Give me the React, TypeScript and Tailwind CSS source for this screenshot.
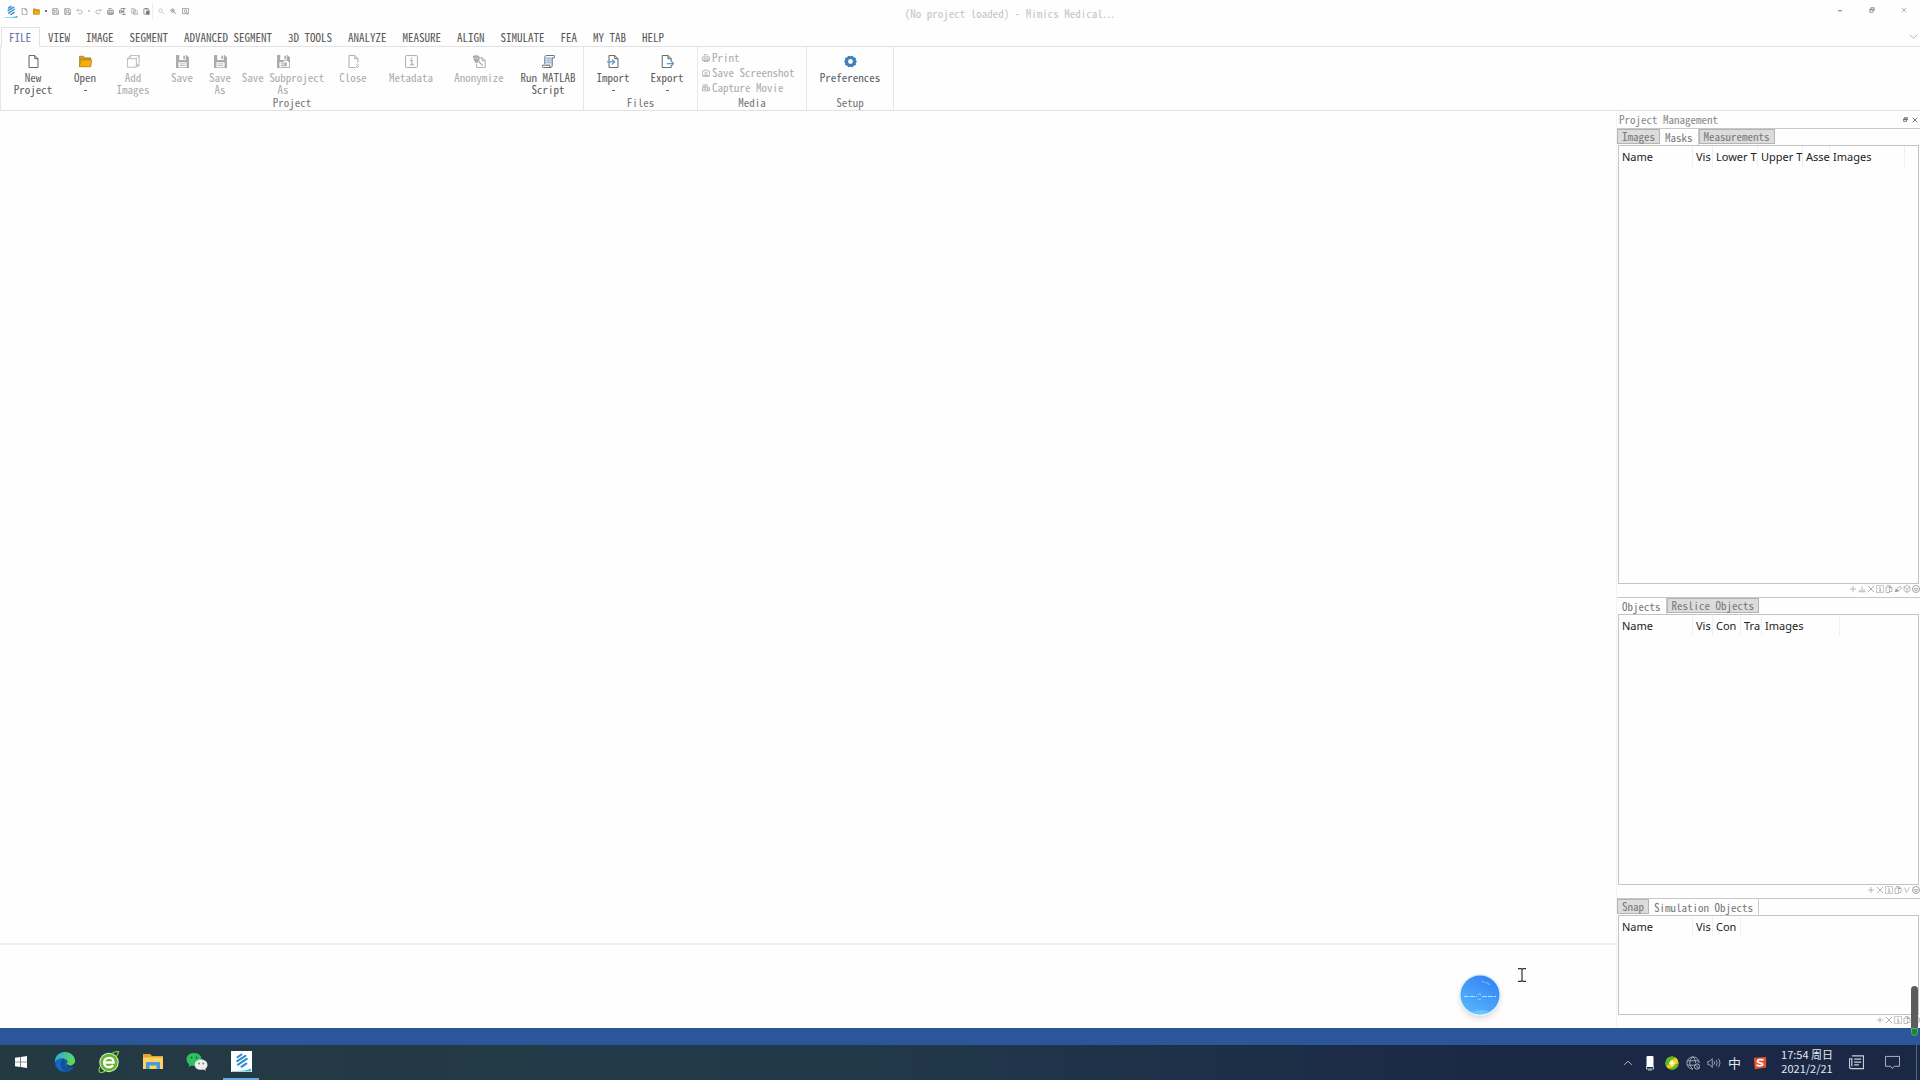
import type { ReactNode } from 'react'
import clsx from 'clsx'

type IconName =
  | 'page'
  | 'folder'
  | 'save'
  | 'saveAll'
  | 'undo'
  | 'redo'
  | 'print'
  | 'cut'
  | 'copy'
  | 'paste'
  | 'search'
  | 'searchPlus'
  | 'searchBox'
  | 'addImages'
  | 'saveSub'
  | 'close'
  | 'info'
  | 'anonymize'
  | 'script'
  | 'import'
  | 'export'
  | 'camera'
  | 'movie'
  | 'gear'
  | 'plus'
  | 'cross'
  | 'threshold'
  | 'duplicate'
  | 'edit'
  | 'cube'
  | 'vee'
  | 'more'
  | 'restore'
  | 'minimize'
  | 'chevronUp'
  | 'chevronDown'

const floppy = (
  <path d="M1.5 1.5h11l2 2v11h-13z M4 1.5v5h7v-5 M4 14.5v-5h8v5" fill="none" stroke="currentColor" strokeWidth="1.6" />
)

const floppySolid = (
  <path
    fillRule="evenodd"
    fill="currentColor"
    d="M0 0h13l3 3v13H0z M4 0v6h8V0z M3 9v6h10V9z M9 1h2v4H9z M4.5 10.5h7v1h-7z M4.5 12.5h7v1h-7z"
  />
)

const page = <path d="M2.5.5h7l4 4v11h-11z M9.5.5v4h4" fill="none" stroke="currentColor" strokeWidth="1.2" />

const shapes: Record<IconName, ReactNode> = {
  page,
  folder: (
    <>
      <path d="M.5 14V1.5h5L7 3.5h7.5V14z" fill="#d99a1c" stroke="#8a6a24" strokeWidth=".7" />
      <path d="M.5 14.5 2.5 6H16l-2 8.5z" fill="#f8ae08" stroke="#a87a1c" strokeWidth=".7" />
    </>
  ),
  save: floppySolid,
  saveAll: floppy,
  undo: <path d="M5 2 2 5l3 3M2 5h8a4 4 0 0 1 0 8H5" fill="none" stroke="currentColor" strokeWidth="1.5" />,
  redo: <path d="M11 2l3 3-3 3M14 5H6a4 4 0 0 0 0 8h6" fill="none" stroke="currentColor" strokeWidth="1.5" />,
  print: (
    <path d="M4.5 6V1h5l2 2v3M1 6h14v7H1zM4 9.5h8V15H4z" fill="none" stroke="currentColor" strokeWidth="1.6" />
  ),
  cut: <path d="M4 1h11M11 1v14M7 15h8M1 5h6v6H1zM4 8h6" fill="none" stroke="currentColor" strokeWidth="1.8" />,
  copy: <path d="M1.5 1.5h6l2 2v8h-8zM6 5h6l2.5 2.5v7H6z" fill="#fff" stroke="currentColor" strokeWidth="1.4" />,
  paste: (
    <>
      <path d="M2 2h11v12H2z" fill="none" stroke="currentColor" strokeWidth="1.6" />
      <path d="M5 0h5v3H5zM7 6h8v9H7z" fill="currentColor" />
    </>
  ),
  search: <path d="M6 2a4 4 0 1 1 0 8 4 4 0 0 1 0-8M9 9l5 5" fill="none" stroke="currentColor" strokeWidth="1.3" />,
  searchPlus: (
    <path d="M6 2a4 4 0 1 1 0 8 4 4 0 0 1 0-8M9 9l5 5M4 6h4M6 4v4" fill="none" stroke="currentColor" strokeWidth="1.5" />
  ),
  searchBox: (
    <path d="M1 13V1h14v12zM8 4a3 3 0 1 1 0 6 3 3 0 0 1 0-6M10 10l4 5" fill="none" stroke="currentColor" strokeWidth="1.4" />
  ),
  addImages: (
    <path
      d="M4 3.5V.5h11v10M.5 4.5 4 1M11.5 4.5 15 1M.5 4.5h11V15H.5zM11.5 12.5h4.5M13.7 10.5V15"
      fill="none"
      stroke="currentColor"
    />
  ),
  saveSub: (
    <>
      {floppySolid}
      <path d="M7.5 6.5h5l3 3v6h-8z" fill="#fff" stroke="currentColor" />
      <path d="M9 9h3v5H9z" fill="currentColor" />
    </>
  ),
  close: (
    <>
      {page}
      <path d="m10 10 5 5m0-5-5 5" stroke="#fff" strokeWidth="3" />
      <path d="m11 11 4 4m0-4-4 4" stroke="currentColor" />
    </>
  ),
  info: (
    <>
      <rect x=".7" y=".7" width="14.6" height="14.6" rx="1" fill="none" stroke="currentColor" strokeWidth="1.2" />
      <path d="M6 6.5h2.5V12M6 12h5M8 3v2" fill="none" stroke="currentColor" strokeWidth="1.5" />
    </>
  ),
  anonymize: (
    <>
      <path d="M5.5 3.5h6l3.5 3v9H4.5V11M11 3.5v3.5h4" fill="none" stroke="currentColor" strokeWidth="1.2" />
      <path d="M0 1c3-1 6-1 8 1v4c-1 2-3 4-4 4S0 6 0 1" fill="currentColor" />
      <path d="M2 4h1.5M5 4h1.5" stroke="#fff" />
      <path d="M7 8l5 5" stroke="currentColor" strokeWidth="1.5" />
    </>
  ),
  script: (
    <>
      <path d="M5 2.5h7v9H5z" fill="#cfe3f5" />
      <path
        d="M3.5 11V3c0-1.5 1-2.5 2-2.5h9c1.5 0 1.5 3 0 3h-2V13c0 1.5-1 2.5-2 2.5H2c-2 0-2-3-1-3h8.5c0 2 .5 3 1.5 3"
        fill="none"
        stroke="currentColor"
        strokeWidth="1.2"
      />
      <path d="M5.5 4h5M5.5 6.5h5M5.5 9h5" stroke="#6fa5d8" />
    </>
  ),
  import: (
    <>
      {page}
      <path d="M0 8.5h9M6 5.500l3.5 3-3.5 3" fill="none" stroke="#5a9bd5" strokeWidth="1.5" />
    </>
  ),
  export: (
    <>
      <path d="M12.5 8V4.500l-4-4h-7v15h11V13M8.5.5v4h4" fill="none" stroke="currentColor" strokeWidth="1.2" />
      <path d="M7 10.5h8M12.5 7.500l3 3-3 3" fill="none" stroke="#5a9bd5" strokeWidth="1.5" />
    </>
  ),
  camera: (
    <path
      d="M1 4h3l1-2h6l1 2h3v9H1zM8 6a2.5 2.5 0 1 1 0 5 2.5 2.5 0 0 1 0-5M1 15h14"
      fill="none"
      stroke="currentColor"
      strokeWidth="1.5"
    />
  ),
  movie: (
    <path
      d="M4 1a2 2 0 1 1 0 4 2 2 0 0 1 0-4M9 1a2 2 0 1 1 0 4 2 2 0 0 1 0-4M1 6h10v8H1zM11 9l4-2v7l-4-2M3 8h6M3 11h6"
      fill="none"
      stroke="currentColor"
      strokeWidth="1.6"
    />
  ),
  gear: (
    <path
      fillRule="evenodd"
      fill="#3d7fbd"
      d="M5.500.8 8 1.600l2.500-.8 1.600 2.100 2.500.9v2.700L16 8l-1.400 1.500v2.700l-2.500.9-1.600 2.100L8 14.400l-2.500.8-1.600-2.100-2.500-.9V9.500L0 8l1.400-1.500V3.800l2.500-.9zM8 5a3 3 0 1 0 0 6 3 3 0 0 0 0-6z"
    />
  ),
  plus: <path d="M8 2v12M2 8h12" stroke="currentColor" strokeWidth="1.3" />,
  cross: <path d="m2 2 12 12M14 2 2 14" stroke="currentColor" strokeWidth="1.5" />,
  threshold: <path d="M1 13.5h14M4 13V9M8 13V3M12 13V8" stroke="currentColor" strokeWidth="1.3" />,
  duplicate: (
    <>
      <path d="M2 4h7v11H2zM4 1h6l4 4v8H9" fill="none" stroke="currentColor" strokeWidth="1.3" />
      <path d="M9 1v5h5z" fill="currentColor" />
    </>
  ),
  edit: (
    <>
      <path d="m5 8 7-6 3 4-6 6z" fill="none" stroke="currentColor" strokeWidth="1.4" />
      <path d="M1 14 4 7l6 6z" fill="currentColor" />
    </>
  ),
  cube: (
    <path d="m8 1 6 3v7l-6 4-6-4V4zM2 4l6 4 6-4M8 8v7" fill="none" stroke="currentColor" strokeWidth="1.3" />
  ),
  vee: <path d="m3 3 4 10 6-10" fill="none" stroke="currentColor" strokeWidth="1.3" />,
  more: (
    <path
      d="M8 1a7 7 0 1 1 0 14A7 7 0 0 1 8 1M3.5 7.500h9M5 9.500l3 2.500 3-2.500"
      fill="none"
      stroke="currentColor"
      strokeWidth="1.8"
    />
  ),
  restore: <path d="M5 5V2h9v7h-3M2 6h9v8H2zM2 7.500h9" fill="none" stroke="currentColor" strokeWidth="2" />,
  minimize: <path d="M3 10h10" stroke="currentColor" strokeWidth="3" />,
  chevronUp: <path d="m2 11 6-6 6 6" fill="none" stroke="currentColor" strokeWidth="1.5" />,
  chevronDown: <path d="m1 5 7 6 7-6" fill="none" stroke="currentColor" strokeWidth="1.5" />,
}

function Icon({ name, className = 'size-2' }: { name: IconName; className?: string }) {
  return (
    <svg viewBox="0 0 16 16" aria-hidden="true" className={clsx('shrink-0', className)}>
      {shapes[name]}
    </svg>
  )
}

function MimicsLogo({ className }: { className: string }) {
  return (
    <svg viewBox="0 0 24 24" aria-hidden="true" className={clsx('shrink-0', className)}>
      <path
        d="m7.500 7 4.500-3M7 11.500 16.500 5.500M8 15.500l10-6.500M12 18l5.500-3.500"
        stroke="#2f8fce"
        strokeWidth="2.4"
        strokeLinecap="round"
      />
      <path d="M1 22.500c7 .5 15 .5 22-2.500v3.500H1z" fill="#37b3e0" />
    </svg>
  )
}

const quickActions: { icon: IconName; label: string; tone: string }[][] = [
  [
    { icon: 'page', label: 'New', tone: 'text-[#666]' },
    { icon: 'folder', label: 'Open', tone: 'text-[#666]' },
  ],
  [
    { icon: 'saveAll', label: 'Save', tone: 'text-[#888]' },
    { icon: 'saveAll', label: 'Save as', tone: 'text-[#888]' },
    { icon: 'undo', label: 'Undo', tone: 'text-[#999]' },
  ],
  [
    { icon: 'redo', label: 'Redo', tone: 'text-[#999]' },
    { icon: 'print', label: 'Print', tone: 'text-[#777]' },
    { icon: 'cut', label: 'Cut', tone: 'text-[#777]' },
    { icon: 'copy', label: 'Copy', tone: 'text-[#888]' },
    { icon: 'paste', label: 'Paste', tone: 'text-[#777]' },
  ],
]

const zoomActions: { icon: IconName; label: string; tone: string }[] = [
  { icon: 'search', label: 'Zoom', tone: 'text-[#aaa]' },
  { icon: 'searchPlus', label: 'Zoom in', tone: 'text-[#777]' },
  { icon: 'searchBox', label: 'Zoom to fit', tone: 'text-[#777]' },
]

function QuickButton({ icon, label, tone }: { icon: IconName; label: string; tone: string }) {
  return (
    <button aria-label={label} className={clsx('flex w-3 justify-center', tone)}>
      <Icon name={icon} className="size-[7px]" />
    </button>
  )
}

function TitleBar() {
  return (
    <header className="flex h-[27px] shrink-0">
      <div className="flex h-[22px] items-center pl-1">
        <MimicsLogo className="size-[14px]" />
        {quickActions.map((group, i) => (
          <div key={i} className="flex items-center">
            {i > 0 && (
              <span className="flex w-[7px] justify-center">
                <span className={clsx('size-[2px]', i === 1 ? 'bg-[#777]' : 'bg-[#ccc]')} />
              </span>
            )}
            {group.map((a) => (
              <QuickButton key={a.label} {...a} />
            ))}
          </div>
        ))}
        <span className="mr-[2px] h-4 w-px bg-[#eee]" />
        {zoomActions.map((a) => (
          <QuickButton key={a.label} {...a} />
        ))}
      </div>
      <h1 className="flex-1 pl-1 text-center leading-[27px] text-[#c4c4c4]">(No project loaded) - Mimics Medical…</h1>
      <div className="flex h-5 text-[#777]">
        <button aria-label="Minimize" className="flex w-8 items-center justify-center">
          <Icon name="minimize" className="size-[6px]" />
        </button>
        <button aria-label="Restore" className="flex w-8 items-center justify-center">
          <Icon name="restore" className="size-[6px]" />
        </button>
        <button aria-label="Close" className="flex w-8 items-center justify-center">
          <Icon name="cross" className="size-[6px]" />
        </button>
      </div>
    </header>
  )
}

const menuTabs = [
  'VIEW',
  'IMAGE',
  'SEGMENT',
  'ADVANCED SEGMENT',
  '3D TOOLS',
  'ANALYZE',
  'MEASURE',
  'ALIGN',
  'SIMULATE',
  'FEA',
  'MY TAB',
  'HELP',
]

function MenuTabs() {
  return (
    <nav className="flex h-5 shrink-0 items-stretch border-b border-[#e2e2e2] text-[#555]">
      <button className="-mb-px ml-px border-x border-t border-[#e2e2e2] bg-[#fefefe] pr-2 pl-[7px] text-[#6474a8]">
        FILE
      </button>
      {menuTabs.map((tab) => (
        <button key={tab} className="px-2 pt-[2px]">
          {tab}
        </button>
      ))}
      <button aria-label="Collapse ribbon" className="mr-[2px] ml-auto text-[#aaa]">
        <Icon name="chevronDown" className="size-[9px]" />
      </button>
    </nav>
  )
}

type Tool = { icon: IconName; lines: string[]; width: string; enabled?: boolean; menu?: boolean }

const projectTools: Tool[] = [
  { icon: 'page', lines: ['New', 'Project'], width: 'w-16', enabled: true },
  { icon: 'folder', lines: ['Open'], width: 'w-10', enabled: true, menu: true },
  { icon: 'addImages', lines: ['Add', 'Images'], width: 'w-14' },
  { icon: 'save', lines: ['Save'], width: 'w-[42px]' },
  { icon: 'save', lines: ['Save', 'As'], width: 'w-[34px]' },
  { icon: 'saveSub', lines: ['Save Subproject', 'As'], width: 'w-[92px]' },
  { icon: 'close', lines: ['Close'], width: 'w-12' },
  { icon: 'info', lines: ['Metadata'], width: 'w-[68px]' },
  { icon: 'anonymize', lines: ['Anonymize'], width: 'w-[68px]' },
  { icon: 'script', lines: ['Run MATLAB', 'Script'], width: 'w-[70px]', enabled: true },
]

const fileTools: Tool[] = [
  { icon: 'import', lines: ['Import'], width: 'w-[58px]', enabled: true, menu: true },
  { icon: 'export', lines: ['Export'], width: 'w-[50px]', enabled: true, menu: true },
]

const setupTools: Tool[] = [{ icon: 'gear', lines: ['Preferences'], width: 'w-[86px]', enabled: true }]

const mediaTools: { icon: IconName; label: string }[] = [
  { icon: 'print', label: 'Print' },
  { icon: 'camera', label: 'Save Screenshot' },
  { icon: 'movie', label: 'Capture Movie' },
]

function ToolButton({ icon, lines, width, enabled, menu }: Tool) {
  return (
    <button
      disabled={!enabled}
      className={clsx(
        'flex flex-col items-center pt-2 leading-3 whitespace-nowrap',
        width,
        enabled ? 'text-[#5c5c5c]' : 'text-[#ababab]',
      )}
    >
      <Icon name={icon} className="mb-[3px] size-[13px]" />
      {lines.map((line) => (
        <span key={line}>{line}</span>
      ))}
      {menu && <span className="mt-[7px] h-px w-[3px] bg-[#666]" />}
    </button>
  )
}

function RibbonGroup({ label, className, children }: { label: string; className?: string; children: ReactNode }) {
  return (
    <section className={clsx('flex flex-col border-r border-[#e8e8e8]', className)}>
      <div className="flex h-[49px]">{children}</div>
      <h2 className="text-center leading-3 text-[#777]">{label}</h2>
    </section>
  )
}

function Ribbon() {
  return (
    <div className="flex h-16 shrink-0 border-b border-[#e2e2e2]">
      <RibbonGroup label="Project" className="border-l">
        {projectTools.map((t, i) => (
          <ToolButton key={i} {...t} />
        ))}
      </RibbonGroup>
      <RibbonGroup label="Files" className="w-[114px]">
        {fileTools.map((t) => (
          <ToolButton key={t.icon} {...t} />
        ))}
      </RibbonGroup>
      <RibbonGroup label="Media" className="w-[109px]">
        <div className="flex flex-col pt-[3px] pl-1">
          {mediaTools.map((t) => (
            <button key={t.label} disabled className="flex h-[15px] items-center gap-[2px] text-[#ababab]">
              <Icon name={t.icon} className="size-2" />
              {t.label}
            </button>
          ))}
        </div>
      </RibbonGroup>
      <RibbonGroup label="Setup">
        {setupTools.map((t) => (
          <ToolButton key={t.icon} {...t} />
        ))}
      </RibbonGroup>
    </div>
  )
}

type Column = { label: string; width: string }

const name = { label: 'Name', width: 'w-[74px]' }
const visible = { label: 'Vis', width: 'w-5' }

const maskColumns: Column[] = [
  name,
  visible,
  { label: 'Lower T', width: 'w-[45px]' },
  { label: 'Upper T', width: 'w-[45px]' },
  { label: 'Asse', width: 'w-[27px]' },
  { label: 'Images', width: 'w-[75px]' },
]

const objectColumns: Column[] = [
  name,
  visible,
  { label: 'Con', width: 'w-7' },
  { label: 'Tra', width: 'w-[21px]' },
  { label: 'Images', width: 'w-[78px]' },
]

const simulationColumns: Column[] = [name, visible, { label: 'Con', width: 'w-7' }]

function ObjectPanel({
  tabs,
  active,
  columns,
  actions,
}: {
  tabs: string[]
  active: string
  columns: Column[]
  actions: IconName[]
}) {
  return (
    <section className="flex min-h-0 flex-col border-t border-[#c8c8c8]">
      <div className="flex h-4 shrink-0 items-stretch">
        {tabs.map((tab) => (
          <button
            key={tab}
            className={clsx(
              'pb-px leading-3 text-[#777]',
              tab === active ? 'border-r border-[#ccc] px-[5px]' : 'mb-px border border-[#b4b4b4] bg-[#dcdcdc] px-1',
            )}
          >
            {tab}
          </button>
        ))}
      </div>
      <div className="mx-px min-h-0 flex-1 border border-[#c4c4c4]">
        <table className="w-full table-fixed border-separate border-spacing-0 font-['Noto_Sans','Open_Sans',sans-serif] text-[#222]">
          <thead>
            <tr>
              {columns.map((c) => (
                <th
                  key={c.label}
                  className={clsx(
                    'h-[21px] border-r border-[#f0f0f0] p-0 pl-[3px] text-left leading-4 font-normal whitespace-nowrap',
                    c.width,
                  )}
                >
                  {c.label}
                </th>
              ))}
              <td />
            </tr>
          </thead>
        </table>
      </div>
      <div className="flex h-[13px] shrink-0 items-center justify-end pb-[3px] text-[#999]">
        {actions.map((icon) => (
          <button key={icon} aria-label={icon} className="flex w-[9px] justify-center">
            <Icon name={icon} />
          </button>
        ))}
      </div>
    </section>
  )
}

function ProjectManagement() {
  return (
    <aside className="relative grid w-[303px] shrink-0 grid-rows-[17px_469fr_301fr_130fr]">
      <div className="flex items-center pl-[2px] text-[#888]">
        <h2 className="flex-1">Project Management</h2>
        <button aria-label="Float panel" className="flex w-[9px] justify-center text-[#333]">
          <Icon name="restore" className="size-[5px]" />
        </button>
        <button aria-label="Close panel" className="mr-px flex w-[9px] justify-center text-[#111]">
          <Icon name="cross" className="size-[6px]" />
        </button>
      </div>
      <ObjectPanel
        tabs={['Images', 'Masks', 'Measurements']}
        active="Masks"
        columns={maskColumns}
        actions={['plus', 'threshold', 'cross', 'info', 'duplicate', 'edit', 'cube', 'more']}
      />
      <ObjectPanel
        tabs={['Objects', 'Reslice Objects']}
        active="Objects"
        columns={objectColumns}
        actions={['plus', 'cross', 'info', 'duplicate', 'vee', 'more']}
      />
      <ObjectPanel
        tabs={['Snap', 'Simulation Objects']}
        active="Simulation Objects"
        columns={simulationColumns}
        actions={['plus', 'cross', 'info', 'duplicate', 'more']}
      />
      {/* Level meter floating over the panel and status bar */}
      <div className="absolute right-[2px] -bottom-2 z-10 flex h-[50px] w-[7px] flex-col justify-end overflow-hidden rounded-full bg-[#5c5c5c]">
        <div className="h-2 rounded-b-full border border-[#5fae7c] bg-[#14853c]" />
      </div>
    </aside>
  )
}

function Workspace() {
  return (
    <main className="relative flex min-w-0 flex-1 flex-col border-r border-[#f4f4f4]">
      <div className="flex-1" />
      <div className="h-[85px] border-t-2 border-[#eee]" />
      <div className="absolute right-[115px] bottom-3 size-[42px] rounded-full border border-[#e4f2fd] bg-[#e4f2fd] shadow-md">
        <svg viewBox="0 0 40 40" aria-hidden="true" className="size-10">
          <defs>
            <linearGradient id="ball" x1=".8" y1="0" x2=".2" y2="1">
              <stop offset="0" stopColor="#3480f6" />
              <stop offset="1" stopColor="#55b8fc" />
            </linearGradient>
          </defs>
          <circle cx="20" cy="20" r="19.5" fill="url(#ball)" />
          <path d="M4 21.500h13M22 21.500h14" stroke="#b5defc" strokeDasharray="5 1" />
          <path d="m18 20 1.500-1.500L21 20M18 23.500l1.500 1.500 1.500-1.500" fill="none" stroke="#a5d5fb" />
          <path d="m22 6 3 2m1-1 4 3" stroke="#8cc4fb" />
          <path d="M11 37c6-2 13-2 18-1-5 4-13 4-18 1" fill="#6cc6fb" />
        </svg>
      </div>
      <svg viewBox="0 0 8 14" aria-hidden="true" className="absolute right-[90px] bottom-[46px] h-[14px] w-2">
        <path d="M0 .7h3l1 1 1-1h3M4 1.500v11M0 13.300h3l1-1 1 1h3" fill="none" stroke="#333" strokeWidth="1.2" />
      </svg>
    </main>
  )
}

function TaskButton({ label, active, children }: { label: string; active?: boolean; children: ReactNode }) {
  return (
    <button
      aria-label={label}
      className={clsx(
        'flex items-center justify-center border-b-2',
        active ? 'mx-1 w-9 border-[#6aa9e4]' : 'w-11 border-transparent',
      )}
    >
      {children}
    </button>
  )
}

function Taskbar() {
  return (
    <footer className="flex h-[35px] shrink-0 justify-between bg-linear-to-r from-[#243a42] via-[#22394a] via-45% to-[#1a2745] to-80%">
      <div className="-ml-px flex">
        <TaskButton label="Start">
          <svg viewBox="0 0 12 12" className="size-3">
            <path d="M0 1.700 5.200 1v4.700H0zM5.800.9 12 0v5.700H5.800zM0 6.300h5.200V11L0 10.300zM5.800 6.300H12V12l-6.200-.9z" fill="#fff" />
          </svg>
        </TaskButton>
        <TaskButton label="Edge">
          <svg viewBox="0 0 24 24" className="size-[22px]">
            <defs>
              <linearGradient id="edgeTop" x1="0" y1="0" x2="1" y2=".3">
                <stop offset="0" stopColor="#2aa8dc" />
                <stop offset="1" stopColor="#5fd65e" />
              </linearGradient>
            </defs>
            <circle cx="12" cy="12" r="11" fill="#1568c0" />
            <path d="M1 12C1 5 6 1 12 1s11 4.500 11 10c0 4-3 6-6 6s-4-1.500-3-3c1.500-3-1-6-5-6s-7 2-8 4" fill="url(#edgeTop)" />
            <path d="M9 9c-3 4-2 12 5 14 4-.5 7-3 8-6-3 2-9 2-10-2-.3-2 1-3 0-5-1-1-2-1.500-3-1" fill="#134f9c" />
            <path d="M14 14c1-2 .5-4-.5-5M14 14c-1 2 0 4 4 4 3 0 5-1 6-4l-2-1c-2 4-6 3.500-8 1" fill="#243b46" />
          </svg>
        </TaskButton>
        <TaskButton label="Browser">
          <svg viewBox="0 0 24 24" className="size-[22px]">
            <circle cx="12" cy="12.5" r="10" fill="#62b52d" stroke="#d6eec4" strokeWidth="1.2" />
            <path
              d="M7 12.500h10c0-3-2-5-5-5s-5.300 2-5.300 5 2.300 5.200 5.300 5.200c2 0 3.500-.7 4.500-2.200"
              fill="none"
              stroke="#fff"
              strokeWidth="2.6"
            />
            <path d="M15 3c2-1.500 5-2.500 7.500-2.500C22 3 21 5 20 6.500M2 17c-1 3-1 5 0 6s4 0 6-1" fill="none" stroke="#7cc83f" strokeWidth="1.4" />
          </svg>
        </TaskButton>
        <TaskButton label="File Explorer">
          <svg viewBox="0 0 20 17" className="h-[17px] w-5">
            <path d="M0 1h7l2 2h11v13H0z" fill="#e8a52c" />
            <path d="M0 4.500h20V16H0z" fill="#fcd267" />
            <path d="M3 16v-6q0-1 1-1h12q1 0 1 1v6h-3.500v-3.500h-7V16z" fill="#4a9bd8" />
          </svg>
        </TaskButton>
        <TaskButton label="WeChat">
          <svg viewBox="0 0 22 19" className="h-[19px] w-[22px]">
            <path
              d="M8 1c4.500 0 7.500 2.800 7.500 6.300S12.500 14 8 14l-2.500-.4L2.500 15l.7-2.600C1.500 11 .5 9.300.5 7.300.5 3.800 3.500 1 8 1"
              fill="#2ec15f"
            />
            <circle cx="5.5" cy="5.5" r="1" fill="#17663a" />
            <circle cx="10.5" cy="5.5" r="1" fill="#17663a" />
            <path
              d="M15 7.500c3.800 0 6.500 2.300 6.500 5.200 0 1.700-.8 3-2.200 4l.5 2-2.300-1.200-2.500.3c-3.700 0-6.300-2.200-6.300-5.100s2.500-5.200 6.300-5.200"
              fill="#ececec"
            />
            <circle cx="13" cy="11.5" r=".9" fill="#777" />
            <circle cx="17.3" cy="11.5" r=".9" fill="#777" />
          </svg>
        </TaskButton>
        <TaskButton label="Mimics" active>
          <span className="bg-white">
            <MimicsLogo className="size-[21px]" />
          </span>
        </TaskButton>
      </div>

      <div className="flex items-center text-[#e4e8ee]">
        <button aria-label="Show hidden icons" className="mr-3 text-[#b8c0cc]">
          <Icon name="chevronUp" className="size-[10px]" />
        </button>
        <svg viewBox="0 0 10 16" aria-hidden="true" className="mr-[10px] h-4 w-[10px]">
          <rect x="1.500" y="1" width="7" height="11" rx="1" fill="#fff" />
          <path d="M1.500 11v3h7v-3M3 15h4" fill="none" stroke="#b8c4d0" />
        </svg>
        <svg viewBox="0 0 16 16" aria-hidden="true" className="mr-[7px] size-[14px]">
          <circle cx="8" cy="8" r="7.500" fill="#f2d21c" />
          <path d="M1 11A7.500 7.500 0 0 1 12 2c-2 2-6 2-7 5s-1 5-4 4" fill="#56b92b" />
          <path d="M15.500 8A7.500 7.500 0 0 1 3 13.500c4 1 8-1 9-4z" fill="#56b92b" />
          <path d="M8 5v6M5 8h6" stroke="#fff" strokeWidth="1.8" />
        </svg>
        <svg viewBox="0 0 16 16" aria-hidden="true" className="mr-[7px] size-[14px]">
          <path
            d="M8 1a7 7 0 1 0 0 14M15 8a7 7 0 0 0-7-7c-5 4-5 10 0 14M8 1c2 2 3 4 3 7M1.500 5.500h13M1.500 10.500H9"
            fill="none"
            stroke="#b4bcc8"
          />
          <path d="M12.500 9a3 3 0 1 1 0 6 3 3 0 0 1 0-6m-2 1 4 4" fill="none" stroke="#c4ccd8" />
        </svg>
        <svg viewBox="0 0 16 16" aria-hidden="true" className="mr-[7px] size-[14px]">
          <path d="M1 6h2l3-3v10L3 10H1zM8 6q1.500 2 0 4M10.500 4.500q2.500 3.500 0 7M13 3q3.500 5 0 10" fill="none" stroke="#a8b2c0" />
        </svg>
        <span className="mr-3 font-['Noto_Sans_CJK_SC',sans-serif] text-[13px]">中</span>
        <svg viewBox="0 0 16 16" aria-hidden="true" className="mr-[14px] size-[14px]">
          <path d="m1 2 14-1v12L2 15z" fill="#e8502c" />
          <path d="M12 4.500c-3-.8-7-.5-7 1.500 0 2.500 6 1 6 3.500 0 2-4 2-7 1" fill="none" stroke="#fff" strokeWidth="2" />
        </svg>
        <div className="pb-[3px] text-center font-['Noto_Sans_CJK_SC',sans-serif] text-[11px] leading-[14px]">
          <p>17:54 周日</p>
          <p>2021/2/21</p>
        </div>
        <button aria-label="News" className="ml-4">
          <svg viewBox="0 0 16 16" className="size-[15px]">
            <path
              d="M3 1h12.500v13.500H2.500Q.5 14.500.5 12V4H3v8M5.500 4.500h7.500M5.500 7.500h7.500M5.500 10.500h5"
              fill="none"
              stroke="#c8d0dc"
              strokeWidth="1.3"
            />
          </svg>
        </button>
        <button aria-label="Notifications" className="ml-[21px]">
          <svg viewBox="0 0 16 16" className="size-[15px]">
            <path d="M.5 1.500h15V12H10l-2 2.500L6 12H.5z" fill="none" stroke="#b4bcc8" />
          </svg>
        </button>
        <span className="mr-[3px] ml-4 h-full w-px bg-[#5a6682]" />
      </div>
    </footer>
  )
}

export default function App() {
  return (
    <div className="flex h-screen flex-col overflow-hidden bg-[#fefefe] font-['Noto_Sans_Mono_CJK_SC','Noto_Sans_CJK_SC','Liberation_Mono',monospace] text-[11px]">
      <TitleBar />
      <MenuTabs />
      <Ribbon />
      <div className="flex min-h-0 flex-1">
        <Workspace />
        <ProjectManagement />
      </div>
      <div className="h-[17px] shrink-0 bg-[#2b579a]" />
      <Taskbar />
    </div>
  )
}
